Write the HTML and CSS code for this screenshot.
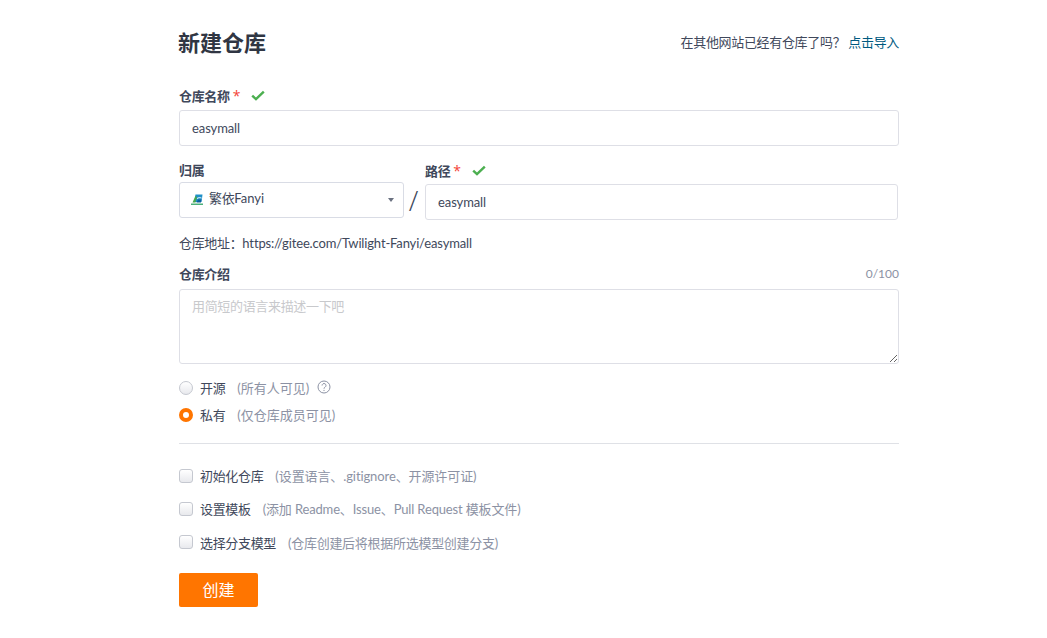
FILE: index.html
```html
<!DOCTYPE html>
<html lang="zh-CN">
<head>
<meta charset="utf-8">
<title>新建仓库</title>
<link rel="stylesheet" href="styles.css">
</head>
<body>
<main class="page">
  <header class="head">
    <h1 class="title">新建仓库</h1>
    <p class="import cjk">在其他网站已经有仓库了吗？ <a class="link" href="#">点击导入</a></p>
  </header>

  <div class="label-row name-label">
    <span class="label cjk">仓库名称</span><span class="req">*</span>
    <svg class="check" viewBox="0 0 14 11"><path d="M1.2 5.6 5 9.2 12.8 1.6" /></svg>
  </div>
  <input class="input" type="text" value="easymall">

  <div class="owner-row">
    <div class="owner">
      <div class="label-row owner-label"><span class="label cjk">归属</span></div>
      <div class="select">
        <svg class="avatar" viewBox="0 0 14 14">
          <path d="M5.5 1.5h7l-1 7.5H4Z" fill="#1f8fc8"/>
          <path d="M2.5 9.5 5.5 3 7 4 5.5 9.5Z" fill="#46a84e"/>
          <path d="M7 5.5c1.5-1 3-1 4.5-.5" fill="none" stroke="#fff" stroke-width="1"/>
          <path d="M6.5 9.5 8 6.5h3.5l-.6 3Z" fill="#0c5f9e"/>
          <rect x="1" y="10.5" width="12" height="1.5" fill="#4cb07a"/>
        </svg>
        <span class="select-text"><span class="cjk">繁依</span>Fanyi</span>
        <span class="caret"></span>
      </div>
    </div>
    <span class="slash">/</span>
    <div class="path">
      <div class="label-row path-label">
        <span class="label cjk">路径</span><span class="req">*</span>
        <svg class="check" viewBox="0 0 14 11"><path d="M1.2 5.6 5 9.2 12.8 1.6" /></svg>
      </div>
      <input class="input" type="text" value="easymall">
    </div>
  </div>

  <p class="address"><span class="cjk">仓库地址：</span><span class="url">https://gitee.com/Twilight-Fanyi/easymall</span></p>

  <div class="desc-head">
    <span class="label cjk">仓库介绍</span>
    <span class="count">0/100</span>
  </div>
  <textarea class="textarea" placeholder="用简短的语言来描述一下吧"></textarea>

  <div class="radios">
    <div class="option">
      <span class="radio"></span><span class="opt-text cjk">开源</span><span class="hint hint-plain">(所有人可见)</span>
      <svg class="help" viewBox="0 0 14 14">
        <circle cx="7" cy="7" r="6" />
        <path d="M5.1 5.5a1.95 1.95 0 1 1 3 1.6c-.7.45-1.1.8-1.1 1.6" />
        <path d="M7 9.9v1.1" />
      </svg>
    </div>
    <div class="option">
      <span class="radio radio-on"></span><span class="opt-text cjk">私有</span><span class="hint hint-plain">(仅仓库成员可见)</span>
    </div>
  </div>

  <hr class="rule">

  <div class="checks">
    <div class="option">
      <span class="box"></span><span class="opt-text cjk">初始化仓库</span><span class="hint hint-tight">(设置语言、.gitignore、开源许可证)</span>
    </div>
    <div class="option">
      <span class="box"></span><span class="opt-text cjk">设置模板</span><span class="hint hint-tighter">(添加 Readme、Issue、Pull Request 模板文件)</span>
    </div>
    <div class="option option-low">
      <span class="box"></span><span class="opt-text cjk">选择分支模型</span><span class="hint hint-cjk">(仓库创建后将根据所选模型创建分支)</span>
    </div>
  </div>

  <button class="submit" type="button">创建</button>
</main>
</body>
</html>
```

FILE: styles.css
```css
* { box-sizing: border-box; }

html, body { margin: 0; background: #fff; }

body {
  font-family: "Lato", "Noto Sans CJK SC", sans-serif;
  font-size: 13px;
  color: #40485b;
  overflow: hidden;
}

.cjk { letter-spacing: -0.33px; }

.page {
  width: 720px;
  margin-left: 179px;
  display: flex;
  flex-direction: column;
}

.head {
  height: 48px;
  margin-top: 20px;
  display: flex;
  align-items: center;
  justify-content: space-between;
}

.title {
  margin: -2px 0 0 -1px;
  font-size: 22px;
  font-weight: 700;
  color: #303643;
  line-height: 48px;
}

.import { margin: -6px 0 0; font-size: 13px; color: #40485b; }

.link { color: #005980; text-decoration: none; }

.label-row {
  display: flex;
  align-items: center;
  height: 20px;
}

.name-label { margin-top: 17px; margin-bottom: 5px; }

.label { font-size: 13px; font-weight: 700; color: #40485b; }

.req {
  color: #f44336;
  font-family: "Open Sans", sans-serif;
  font-weight: 400;
  font-size: 14px;
  margin-left: 3px;
}

.check {
  width: 14px;
  height: 11px;
  margin-left: 11px;
  fill: none;
  stroke: #4caf50;
  stroke-width: 2.4;
}

.input {
  display: block;
  width: 100%;
  height: 36px;
  padding: 0 12px;
  border: 1px solid #dedfe6;
  border-radius: 3px;
  background: #fff;
  font: inherit;
  letter-spacing: -0.1px;
  color: #40485b;
  outline: none;
}

.owner-row {
  display: flex;
  margin-top: 14px;
}

.owner { width: 225px; flex: none; }

.owner-label { margin-bottom: 2px; margin-top: -2px; height: 22px; }

.select {
  height: 36px;
  display: flex;
  align-items: center;
  padding: 0 9px 0 10px;
  border: 1px solid #d9dce5;
  border-radius: 3px;
}

.avatar { width: 14px; height: 14px; flex: none; }

.select-text { margin-left: 5px; margin-top: -6px; flex: 1; }

.caret {
  width: 0;
  height: 0;
  border-left: 3.5px solid transparent;
  border-right: 3.5px solid transparent;
  border-top: 4px solid #6a7180;
}

.slash {
  width: 21px;
  flex: none;
  margin-top: 22px;
  padding-right: 2px;
  text-align: center;
  font-family: "Open Sans", sans-serif;
  font-size: 28px;
  line-height: 36px;
  font-weight: 300;
  color: #40485b;
}

.path { width: 473px; flex: none; }

.path-label { margin-bottom: 4px; }

.address { margin: 14px 0 0; line-height: 18px; }

.url { letter-spacing: -0.15px; }

.desc-head {
  display: flex;
  justify-content: space-between;
  align-items: center;
  height: 20px;
  margin-top: 11px;
  margin-bottom: 6px;
}

.count { font-size: 12px; margin-top: 1px; color: #8c92a4; }

.textarea {
  display: block;
  width: 100%;
  height: 75px;
  padding: 6px 12px;
  border: 1px solid #dedfe6;
  border-radius: 3px;
  font: inherit;
  letter-spacing: -0.33px;
  color: #40485b;
  outline: none;
  resize: vertical;
}

.textarea::placeholder { color: #c8c9cc; }

.option {
  display: flex;
  align-items: center;
  height: 20px;
}

.radios {
  margin-top: 14px;
  display: flex;
  flex-direction: column;
  gap: 7px;
}

.radio {
  width: 14px;
  height: 14px;
  flex: none;
  border-radius: 50%;
  border: 1px solid #c5c8d0;
  background: linear-gradient(#fff, #e8e9ed);
}

.radio-on {
  border: 4.5px solid #ff7500;
  background: #fff;
}

.opt-text { margin-left: 7px; margin-top: -2px; color: #40485b; }

.hint { margin-left: 12px; margin-top: -2px; color: #8c92a4; }

.option-low .opt-text,
.option-low .hint { margin-top: 0; }

.hint-tight { letter-spacing: -0.1px; }

.hint-tighter { letter-spacing: -0.15px; }

.hint-cjk { letter-spacing: -0.28px; }

.help {
  width: 14px;
  height: 14px;
  margin-left: 8px;
  margin-top: -2px;
  fill: none;
  stroke: #8c92a4;
  stroke-width: 1;
}

.rule {
  width: 100%;
  margin: 18px 0 0;
  border: 0;
  border-top: 1px solid #dfe1e6;
}

.checks {
  margin-top: 22px;
  display: flex;
  flex-direction: column;
  gap: 13px;
}

.box {
  width: 14px;
  height: 14px;
  flex: none;
  border-radius: 3px;
  border: 1px solid #c5c8d0;
  background: linear-gradient(#fff, #e8e9ed);
}

.submit {
  width: 79px;
  height: 34px;
  margin-top: 21px;
  padding: 0 0 2px;
  border: 0;
  border-radius: 2px;
  background: #ff7500;
  color: #fff;
  font: inherit;
  font-size: 16px;
}
```
